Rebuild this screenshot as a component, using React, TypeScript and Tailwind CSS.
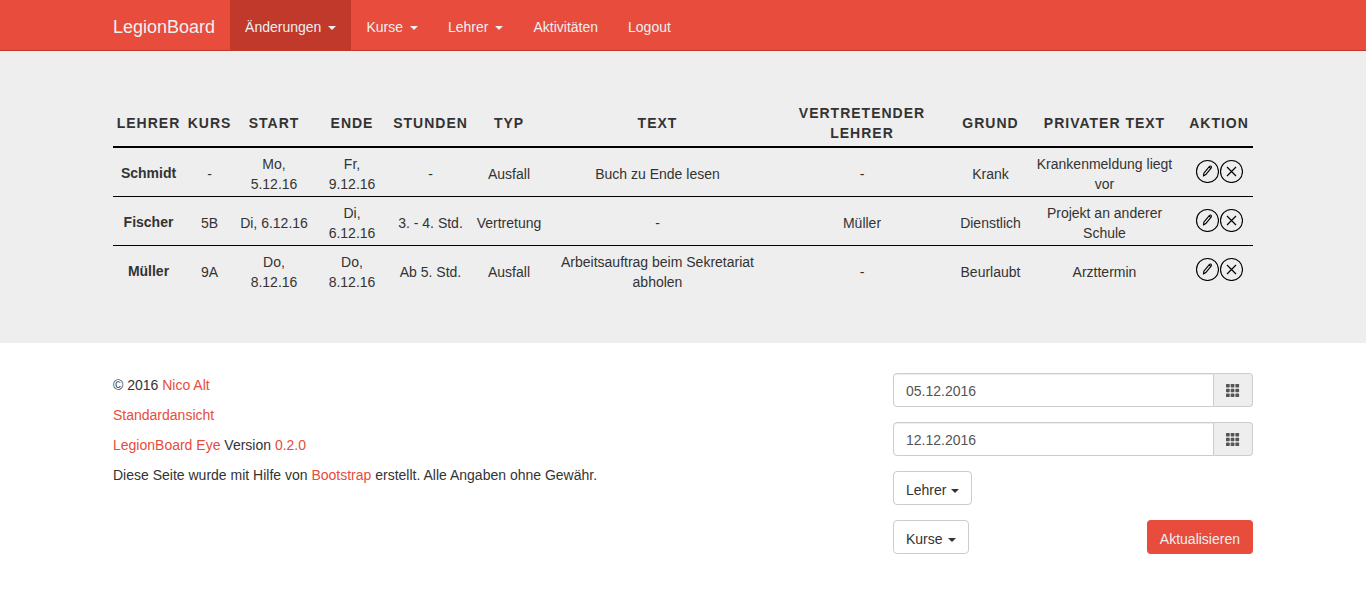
import React from "react";

type Change = {
  teacher: string;
  course: string;
  start: string;
  end: string;
  hours: string;
  type: string;
  text: string;
  substitute: string;
  reason: string;
  privateText: string;
};

const changes: Change[] = [
  { teacher: "Schmidt", course: "-", start: "Mo, 5.12.16", end: "Fr, 9.12.16", hours: "-", type: "Ausfall", text: "Buch zu Ende lesen", substitute: "-", reason: "Krank", privateText: "Krankenmeldung liegt vor" },
  { teacher: "Fischer", course: "5B", start: "Di, 6.12.16", end: "Di, 6.12.16", hours: "3. - 4. Std.", type: "Vertretung", text: "-", substitute: "Müller", reason: "Dienstlich", privateText: "Projekt an anderer Schule" },
  { teacher: "Müller", course: "9A", start: "Do, 8.12.16", end: "Do, 8.12.16", hours: "Ab 5. Std.", type: "Ausfall", text: "Arbeitsauftrag beim Sekretariat abholen", substitute: "-", reason: "Beurlaubt", privateText: "Arzttermin" },
];

const columns = [
  { label: "Lehrer", width: "w-[71px]" },
  { label: "Kurs", width: "w-[51px]" },
  { label: "Start", width: "w-[78px]" },
  { label: "Ende", width: "w-[78px]" },
  { label: "Stunden", width: "w-[79px]" },
  { label: "Typ", width: "w-[78px]" },
  { label: "Text", width: "w-[219px]" },
  { label: "Vertretender Lehrer", width: "w-[190px]" },
  { label: "Grund", width: "w-[67px]" },
  { label: "Privater Text", width: "w-[161px]" },
  { label: "Aktion", width: "w-[68px]" },
];

const navItems = [
  { label: "Änderungen", menu: true, active: true },
  { label: "Kurse", menu: true, active: false },
  { label: "Lehrer", menu: true, active: false },
  { label: "Aktivitäten", menu: false, active: false },
  { label: "Logout", menu: false, active: false },
];

function Caret() {
  return <span aria-hidden="true" className="inline-block border-x-4 border-t-4 border-x-transparent border-t-current align-middle" />;
}

function EditIcon() {
  return (
    <svg width="24" height="24" viewBox="0 0 24 24" fill="none" stroke="#000" aria-hidden="true">
      <circle cx="12.5" cy="12.5" r="11" strokeWidth="1.1" />
      <path d="M8.4 17 L8.9 14.2 L14.5 7.4 Q15.3 6.7 16.1 7.3 Q16.8 8 16.3 8.8 L10.8 15.6 Z M14.1 8 L15.8 9.4" strokeWidth="1.1" strokeLinejoin="round" />
    </svg>
  );
}

function RemoveIcon() {
  return (
    <svg width="24" height="24" viewBox="0 0 24 24" fill="none" stroke="#000" aria-hidden="true">
      <circle cx="12.5" cy="12.5" r="11" strokeWidth="1.1" />
      <path d="M8 8 L17 17 M17 8 L8 17" strokeWidth="1.2" />
    </svg>
  );
}

function GridIcon() {
  return (
    <svg width="14" height="14" viewBox="0 0 14 14" fill="#555" aria-hidden="true">
      {[1, 5.8, 10.6].map((y) => [0, 4.7, 9.4].map((x) => <rect key={`${x}-${y}`} x={x} y={y} width="3.7" height="3.4" rx="0.6" />))}
    </svg>
  );
}

function DateField({ id, label, value }: { id: string; label: string; value: string }) {
  return (
    <div className="flex">
      <input
        id={id}
        type="text"
        aria-label={label}
        defaultValue={value}
        className="min-w-0 flex-1 rounded-l border border-[#ccc] bg-white px-3 pt-[7px] pb-[5px] text-sm leading-5 text-[#555] shadow-[inset_0_1px_1px_rgba(0,0,0,0.075)] outline-none focus:border-[#e74c3c]"
      />
      <button type="button" aria-label={`${label} auswählen`} className="flex w-[39px] items-center justify-center rounded-r border border-l-0 border-[#ccc] bg-[#eee]">
        <GridIcon />
      </button>
    </div>
  );
}

function MenuButton({ label }: { label: string }) {
  return (
    <button type="button" className="h-[34px] rounded border border-[#ccc] bg-white px-3 pt-1 leading-5 text-[#333]">
      {label}<span className="ml-[5px]"><Caret /></span>
    </button>
  );
}

function Link({ children }: { children: React.ReactNode }) {
  return <a href="#" className="text-[#e74c3c] hover:underline">{children}</a>;
}

export default function App() {
  const cell = "px-1 pt-1.5 pb-0.5";
  return (
    <div className="min-h-screen bg-white font-['Liberation_Sans',Arial,sans-serif] text-sm leading-5 text-[#333]">
      <nav className="border-b border-[#c0392b] bg-[#e74c3c] text-[#ecf0f1]">
        <div className="mx-auto flex max-w-[1140px] flex-wrap">
          <a href="#" className="pt-[17px] pr-[15px] pb-[13px] text-lg leading-5">LegionBoard</a>
          <ul className="flex flex-wrap">
            {navItems.map((item) => (
              <li key={item.label}>
                <a href="#" className={`block px-[15px] pt-[17px] pb-[13px] ${item.active ? "bg-[#c0392b]" : "hover:bg-[#c0392b]"}`}>
                  {item.label}
                  {item.menu && <span className="ml-[7px]"><Caret /></span>}
                </a>
              </li>
            ))}
          </ul>
        </div>
      </nav>

      <main className="bg-[#eee] pt-12 pb-[49px]">
        <div className="mx-auto max-w-[1140px]">
          <table className="w-full table-fixed border-collapse text-center">
            <thead>
              <tr className="border-b-2 border-black">
                {columns.map((c) => (
                  <th key={c.label} scope="col" className={`${c.width} pt-1 pb-[3px] align-middle font-bold tracking-[1px] uppercase`}>{c.label}</th>
                ))}
              </tr>
            </thead>
            <tbody>
              {changes.map((c) => (
                <tr key={c.teacher} className="border-b border-black last:border-b-0">
                  <th scope="row" className="px-1 pt-1.5 pb-1 font-bold">{c.teacher}</th>
                  <td className={cell}>{c.course}</td>
                  <td className={cell}>{c.start}</td>
                  <td className="px-1.5 pt-1.5 pb-0.5">{c.end}</td>
                  <td className={cell}>{c.hours}</td>
                  <td className={cell}>{c.type}</td>
                  <td className={cell}>{c.text}</td>
                  <td className={cell}>{c.substitute}</td>
                  <td className="pt-1.5 pb-0.5">{c.reason}</td>
                  <td className={cell}>{c.privateText}</td>
                  <td className="px-1 pb-0.5">
                    <div className="flex justify-center">
                      <button type="button" aria-label={`${c.teacher} bearbeiten`}><EditIcon /></button>
                      <button type="button" aria-label={`${c.teacher} löschen`}><RemoveIcon /></button>
                    </div>
                  </td>
                </tr>
              ))}
            </tbody>
          </table>
        </div>
      </main>

      <footer className="mx-auto flex max-w-[1140px] justify-between gap-8 pt-[30px] pb-12">
        <div className="space-y-2.5 pt-0.5">
          <p>© 2016 <Link>Nico Alt</Link></p>
          <p><Link>Standardansicht</Link></p>
          <p><Link>LegionBoard Eye</Link> Version <Link>0.2.0</Link></p>
          <p>Diese Seite wurde mit Hilfe von <Link>Bootstrap</Link> erstellt. Alle Angaben ohne Gewähr.</p>
        </div>
        <form className="flex w-[360px] flex-col gap-[15px]" onSubmit={(e) => e.preventDefault()}>
          <DateField id="from" label="Startdatum" value="05.12.2016" />
          <DateField id="until" label="Enddatum" value="12.12.2016" />
          <div><MenuButton label="Lehrer" /></div>
          <div className="flex justify-between">
            <MenuButton label="Kurse" />
            <button type="submit" className="h-[34px] rounded bg-[#e74c3c] px-[13px] pt-1 text-[#ecf0f1]">Aktualisieren</button>
          </div>
        </form>
      </footer>
    </div>
  );
}
